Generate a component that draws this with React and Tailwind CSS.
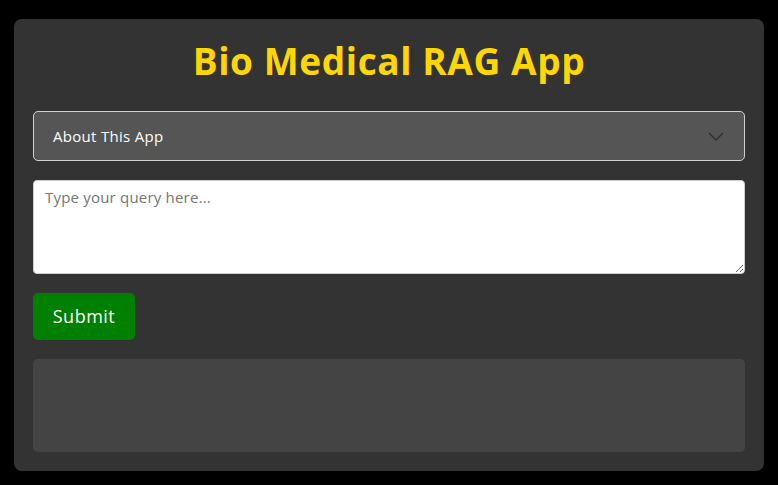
export default function App() {
  return (
    <div
      className="min-h-[485px] bg-black pt-[19px] pb-[14px]"
      style={{ fontFamily: '"Open Sans", "Liberation Sans", sans-serif' }}
    >
      <div className="mx-auto w-[750px] rounded-lg bg-[#333333] px-[19px] pb-[19px] pt-[19px]">
        <h1 className="mt-[1px] mb-[28px] text-center text-[37px] font-bold leading-[44px] tracking-[0.6px] text-[#FFD700]">
          Bio Medical RAG App
        </h1>

        <button className="flex h-[50px] w-full items-center justify-between rounded-[5px] border border-[#d0d0d0] bg-[#555555] pl-[19px] pr-[20px] text-left text-[15px] tracking-[0.3px] text-white">
          <span>About This App</span>
          <svg width="16" height="9" viewBox="0 0 16 9" fill="none">
            <path d="M1 1l7 7 7-7" stroke="#2e2e2e" strokeWidth="1.3" />
          </svg>
        </button>

        <textarea
          placeholder="Type your query here..."
          className="mt-[19px] block h-[94px] w-full rounded-[4px] border border-[#cccccc] bg-white px-[11px] pt-[5px] pb-[8px] text-[15px] tracking-[0.2px] text-[#333] placeholder:text-[#757575]"
        />

        <button className="mt-[19px] h-[47px] w-[102px] rounded-[5px] bg-[#008000] text-[18px] tracking-[0.5px] text-white">
          Submit
        </button>

        <div className="mt-[19px] h-[93px] rounded-[5px] bg-[#444444]" />
      </div>
    </div>
  );
}
